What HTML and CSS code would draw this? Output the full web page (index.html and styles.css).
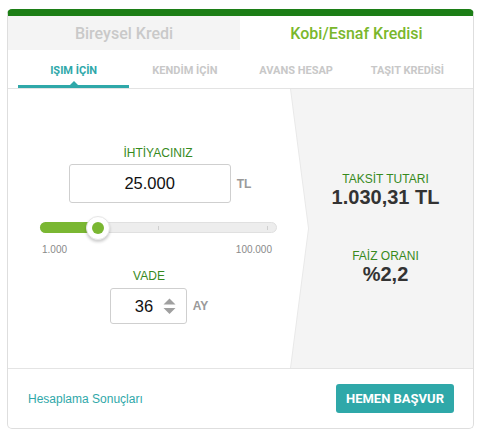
FILE: index.html
```html
<!DOCTYPE html>
<html lang="tr">
<head>
<meta charset="utf-8">
<link rel="stylesheet" href="styles.css">
</head>
<body>
<div class="card">
  <div class="tabs">
    <div class="tab">Bireysel Kredi</div>
    <div class="tab tab-active">Kobi/Esnaf Kredisi</div>
  </div>
  <div class="subtabs">
    <div class="subtab subtab-active">IŞIM İÇİN</div>
    <div class="subtab">KENDİM İÇİN</div>
    <div class="subtab">AVANS HESAP</div>
    <div class="subtab">TAŞIT KREDİSİ</div>
  </div>
  <div class="main">
    <div class="calc">
      <div class="label label-need">İHTİYACINIZ</div>
      <div class="amount-row">
        <div class="field field-amount">25.000</div>
        <span class="unit">TL</span>
      </div>
      <div class="slider">
        <div class="track">
          <div class="fill" style="width: 57px"></div>
          <span class="tick tick-1"></span>
          <span class="tick tick-2"></span>
          <div class="knob" style="left: 57px"><span class="knob-dot"></span></div>
        </div>
        <div class="scale">
          <span>1.000</span>
          <span>100.000</span>
        </div>
      </div>
      <div class="label label-term">VADE</div>
      <div class="term-row">
        <div class="field field-term">
          <span class="term-value">36</span>
          <svg class="spin" width="13" height="17" viewBox="0 0 13 17">
            <path d="M6.5 0.5 L12.5 6.5 L0.5 6.5 Z" fill="#a0a0a0"/>
            <path d="M0.5 10 L12.5 10 L6.5 16 Z" fill="#a0a0a0"/>
          </svg>
        </div>
        <span class="unit">AY</span>
      </div>
    </div>
    <div class="result">
      <div class="result-inner">
        <div class="label">TAKSİT TUTARI</div>
        <div class="value">1.030,31 TL</div>
        <div class="label label-rate">FAİZ ORANI</div>
        <div class="value">%2,2</div>
      </div>
    </div>
  </div>
  <div class="footer">
    <a class="link">Hesaplama Sonuçları</a>
    <button class="apply">HEMEN BAŞVUR</button>
  </div>
</div>
</body>
</html>
```

FILE: styles.css
```css
* { box-sizing: border-box; }
html, body { margin: 0; padding: 0; background: #fff; }
body { font-family: "Liberation Sans", Arial, sans-serif; }

.card {
  margin: 9px 0 0 7px;
  width: 467px;
  border: 1px solid #dedede;
  border-top: 7px solid #1c7e16;
  border-radius: 5px;
  overflow: hidden;
  background: #fff;
}

.tabs {
  display: grid;
  grid-template-columns: 232px 1fr;
  height: 34px;
}
.tab {
  display: flex;
  align-items: center;
  justify-content: center;
  font-family: Roboto, sans-serif;
  font-weight: 500;
  font-size: 16px;
  color: #c9c9c9;
  background: #f4f4f4;
}
.tab-active {
  background: #fff;
  color: #7ab72c;
}

.subtabs {
  display: grid;
  grid-template-columns: repeat(4, 1fr);
  padding: 0 10px;
  height: 39px;
  border-bottom: 1px solid #e3e3e3;
}
.subtab {
  position: relative;
  display: flex;
  align-items: center;
  justify-content: center;
  padding-top: 2px;
  font-family: Roboto, sans-serif;
  font-weight: 700;
  font-size: 11px;
  color: #c8c8c8;
}
.subtab-active { color: #2fa8a9; }
.subtab-active::after {
  content: "";
  position: absolute;
  left: 0; right: 0; bottom: 0;
  height: 3px;
  background: #2fa8a9;
}
.subtab-active::before {
  content: "";
  position: absolute;
  left: 50%;
  bottom: 3px;
  margin-left: -4px;
  border-left: 4px solid transparent;
  border-right: 4px solid transparent;
  border-bottom: 4px solid #2fa8a9;
}

.main {
  display: grid;
  grid-template-columns: 282px 1fr;
  height: 280px;
  border-bottom: 1px solid #e4e4e4;
}

.calc {
  display: flex;
  flex-direction: column;
  align-items: center;
  padding-top: 57px;
}
.label {
  font-size: 12px;
  line-height: 14px;
  color: #378a1d;
  text-align: center;
}
.label-need { margin-left: 18px; }

.amount-row {
  display: flex;
  align-items: center;
  gap: 6px;
  margin-top: 4px;
  padding-left: 22px;
}
.field {
  border: 1px solid #cfcfcf;
  border-radius: 3px;
  background: #fff;
  color: #111;
  font-size: 16px;
}
.field-amount {
  width: 162px;
  height: 39px;
  display: flex;
  align-items: center;
  justify-content: center;
  font-size: 16.5px;
}
.unit {
  font-size: 12px;
  font-weight: 700;
  color: #9a9a9a;
}

.slider {
  align-self: flex-start;
  width: 237px;
  margin: 19px 0 0 32px;
}
.track {
  position: relative;
  height: 11px;
  border: 1px solid #e0e0e0;
  border-radius: 6px;
  background: #ededed;
}
.fill {
  position: absolute;
  left: -1px; top: -1px; bottom: -1px;
  background: #7ab732;
  border-radius: 6px 0 0 6px;
}
.tick {
  position: absolute;
  top: 3px;
  width: 1px;
  height: 4px;
  background: #cfcfcf;
}
.tick-1 { left: 117px; }
.tick-2 { left: 226px; }
.knob {
  position: absolute;
  top: 50%;
  width: 24px;
  height: 24px;
  margin: -12px 0 0 -12px;
  border-radius: 50%;
  background: #fff;
  border: 1px solid #e6e6e6;
  box-shadow: 0 2px 3px rgba(0,0,0,0.2);
  display: flex;
  align-items: center;
  justify-content: center;
}
.knob-dot {
  width: 12px;
  height: 12px;
  border-radius: 50%;
  background: #7ab732;
}
.scale {
  display: flex;
  justify-content: space-between;
  padding: 0 5px 0 2px;
  margin-top: 11px;
  font-size: 10px;
  line-height: 12px;
  color: #8a8a8a;
}

.label-term { margin-top: 13px; }

.term-row {
  display: flex;
  align-items: center;
  gap: 6px;
  margin-top: 5px;
  padding-left: 20px;
}
.field-term {
  width: 77px;
  height: 36px;
  display: flex;
  align-items: center;
  padding-left: 24px;
}
.term-value { font-size: 16.5px; }
.spin { margin-left: 10px; }

.result {
  position: relative;
  background: #e9e9e9;
  clip-path: polygon(0 0, 100% 0, 100% 100%, 0 100%, 18px 50%);
}
.result::before {
  content: "";
  position: absolute;
  top: 0; bottom: 0; left: 1px; right: 0;
  background: #f4f4f4;
  clip-path: polygon(0 0, 100% 0, 100% 100%, 0 100%, 18px 50%);
}
.result-inner {
  position: relative;
  display: flex;
  flex-direction: column;
  align-items: center;
  padding: 83px 0 0 8px;
}
.value {
  font-size: 20px;
  line-height: 22px;
  font-weight: 700;
  color: #333;
}
.label-rate { margin-top: 41px; }

.footer {
  display: flex;
  align-items: center;
  justify-content: space-between;
  height: 59px;
  padding: 0 19px 0 20px;
}
.link {
  font-size: 12px;
  color: #2fa8a9;
}
.apply {
  width: 118px;
  height: 29px;
  border: 0;
  border-radius: 3px;
  background: #2fa8a9;
  color: #fff;
  font-family: Roboto, sans-serif;
  font-weight: 700;
  font-size: 13px;
  padding: 0;
}
```
